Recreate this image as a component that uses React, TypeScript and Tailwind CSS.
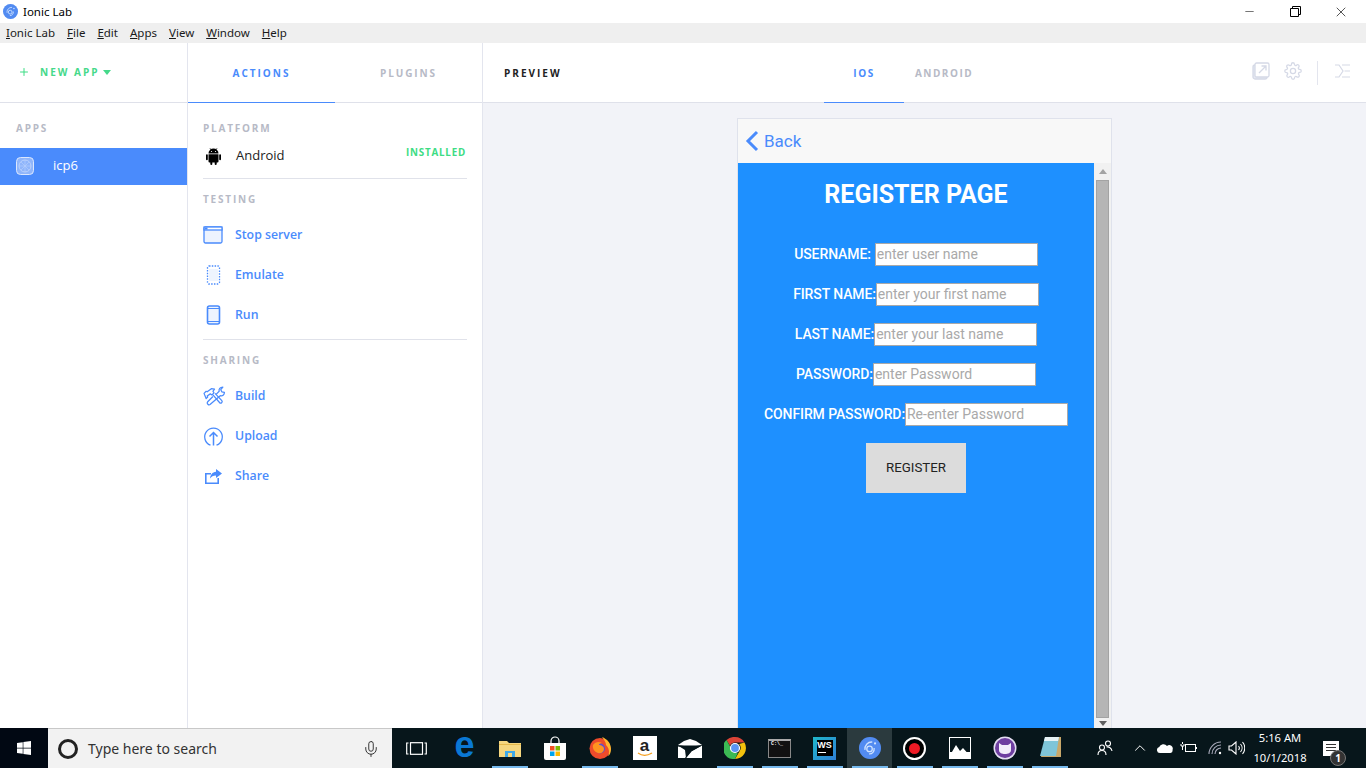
import { ChevronUp, Mic, Minus, Plus, X } from "lucide-react";
import { FaWindows } from "react-icons/fa";

const BLUE = "#4a8bfc";

function IonicLogo({ size }: { size: number }) {
  return (
    <svg width={size} height={size} viewBox="0 0 24 24">
      <circle cx="12" cy="12" r="12" fill="#4a8ff5" />
      <circle cx="12" cy="12" r="12" fill="#6a7fe8" opacity="0.25" />
      <circle cx="11.5" cy="13" r="3" fill="none" stroke="#cfe2ff" strokeWidth="1.4" />
      <path d="M6.5 14c-.6-4.5 3-9 8-8.500" fill="none" stroke="#cfe2ff" strokeWidth="1.4" />
      <path d="M16.500 12c.5 3.500-2 6.800-5.500 6.500" fill="none" stroke="#cfe2ff" strokeWidth="1.4" />
      <circle cx="17.500" cy="7" r="1.200" fill="#cfe2ff" />
    </svg>
  );
}

function SectionLabel({ children }: { children: string }) {
  return <div className="text-[10px] font-bold tracking-[0.18em] text-[#b7bac6] leading-[14px]">{children}</div>;
}

function ActionRow({ icon, label }: { icon: React.ReactNode; label: string }) {
  return (
    <div className="flex items-center h-[40px]">
      <div className="w-[32px] flex items-center">{icon}</div>
      <span className="text-[12.300px] font-semibold text-[#4a8bfc]">{label}</span>
    </div>
  );
}

const AndroidIcon = (
  <svg width="21" height="17" viewBox="0 0 21 17" fill="#000">
    <path d="M5.500 5.500a5 5 0 0 1 10 0z" />
    <path d="M7 .3l1.500 2M14 .3l-1.500 2" stroke="#000" strokeWidth="0.800" />
    <path d="M5.500 6.200h10v7.300a1 1 0 0 1-1 1h-8a1 1 0 0 1-1-1z" />
    <rect x="3" y="6.200" width="1.800" height="6" rx="0.900" />
    <rect x="16.200" y="6.200" width="1.800" height="6" rx="0.900" />
    <rect x="7.300" y="13" width="2" height="4" rx="1" />
    <rect x="11.700" y="13" width="2" height="4" rx="1" />
    <circle cx="8.500" cy="3.500" r="0.600" fill="#fff" />
    <circle cx="12.500" cy="3.500" r="0.600" fill="#fff" />
  </svg>
);
const ServerIcon = (
  <svg width="20" height="18" viewBox="0 0 20 18">
    <rect x="1" y="1" width="18" height="16" rx="1.500" fill="#edf3fe" stroke={BLUE} strokeWidth="1.300" />
    <rect x="1" y="1" width="18" height="3" fill="#fff" stroke={BLUE} strokeWidth="1.300" />
    <rect x="1.500" y="1.500" width="3" height="2" fill={BLUE} />
  </svg>
);
const EmulateIcon = (
  <svg width="21" height="20" viewBox="0 0 21 20">
    <rect x="4.500" y="1" width="12" height="18" rx="1.500" fill="#fff" stroke={BLUE} strokeWidth="1.300" strokeDasharray="1.500 1.300" />
    <rect x="6" y="4" width="9" height="12" fill="#eef4fe" />
  </svg>
);
const RunIcon = (
  <svg width="21" height="20" viewBox="0 0 21 20">
    <rect x="4.500" y="1" width="12" height="18" rx="2" fill="#eef4fe" stroke={BLUE} strokeWidth="1.600" />
    <path d="M4.500 3.500h12M4.500 16.500h12" stroke={BLUE} strokeWidth="1.200" />
  </svg>
);
const BuildIcon = (
  <svg width="23" height="21" viewBox="0 0 22 20" fill="none" stroke={BLUE} strokeWidth="1.200" strokeLinejoin="round">
    <path d="M1 7l2-2 1 .5L8 2.500l3 .5-1.500 2 1 1.500-2 2L7 7.500 4 9.500l.5 1L3 12z" />
    <path d="M9.500 8.500l6.500 7.500c1 1.200 3.200-.5 2-2l-6.500-7" />
    <path d="M12.500 8l3-3c-.7-2 .8-4 3.500-4l-2 2.500 1 2 2.500.500c0 2.500-2 4-4 3.200L7 17.500c-1.500 1.500-4-.8-2.500-2.500l5-5" />
  </svg>
);
const UploadIcon = (
  <svg width="21" height="21" viewBox="0 0 21 21" fill="none" stroke={BLUE} strokeWidth="1.300">
    <path d="M7.500 19.200a8.800 8.800 0 1 1 6 0" />
    <path d="M10.500 19.500V7M6.500 10.500l4-4 4 4" strokeWidth="1.500" />
  </svg>
);
const ShareIcon = (
  <svg width="20" height="18" viewBox="0 0 20 18">
    <path d="M2 6h6v1.600H3.600v7.800h10.800V11H16v6H2z" fill={BLUE} />
    <path d="M13 2l6 4.500L13 11V8.500c-3 0-4.500 1-6 3 .3-3.500 2.300-6.500 6-6.800z" fill={BLUE} />
  </svg>
);

function TaskIcon({ children, running, active }: { children: React.ReactNode; running?: boolean; active?: boolean }) {
  return (
    <div className={`relative w-[45px] h-full flex items-center justify-center ${active ? "bg-[#2b3a3e]" : ""}`}>
      {children}
      {running && <div className="absolute left-[5px] right-[4px] bottom-0 h-[2px] bg-[#76b9ed]" />}
    </div>
  );
}

function FormRow({ label, placeholder, tight }: { label: string; placeholder: string; tight?: boolean }) {
  return (
    <div className={`flex items-center justify-center h-[23px] ${tight ? "" : "gap-[4px]"}`}>
      <span className="text-[14px] font-medium text-white tracking-[-0.1px]">{label}</span>
      <input
        readOnly
        placeholder={placeholder}
        className="w-[163px] h-[23px] bg-white border border-[#a9a9a9] px-[1px] pb-[1px] text-[14px] text-black outline-none placeholder:text-[#a9a9a9] font-['Roboto',sans-serif]"
      />
    </div>
  );
}

export default function App() {
  return (
    <div className="h-screen w-[1366px] overflow-hidden flex flex-col bg-white font-['Open_Sans',sans-serif]">
      {/* window title */}
      <div className="h-[23px] flex items-center shrink-0 bg-white">
        <div className="ml-[3px] mr-[5px] flex"><IonicLogo size={15} /></div>
        <span className="text-[11.500px] text-black font-['Noto_Sans',sans-serif]">Ionic Lab</span>
        <div className="ml-auto mr-[2px] flex h-full">
          <div className="w-[46px] flex items-center justify-center"><Minus size={13} strokeWidth={1} className="text-black" /></div>
          <div className="w-[46px] flex items-center justify-center">
            <svg width="11" height="11" viewBox="0 0 11 11" fill="none" stroke="#000">
              <path d="M.5 2.500h8v8h-8zM2.500 2.500v-2h8v8h-2" />
            </svg>
          </div>
          <div className="w-[46px] flex items-center justify-center"><X size={16} strokeWidth={1} className="text-black" /></div>
        </div>
      </div>

      {/* menu */}
      <div className="h-[20px] shrink-0 bg-[#efefef] flex items-center pl-[6px] gap-[12px] text-[11.500px] text-[#1a1a1a] font-['Noto_Sans',sans-serif]">
        {["Ionic Lab", "File", "Edit", "Apps", "View", "Window", "Help"].map((m) => (
          <span key={m}><span className="underline">{m[0]}</span>{m.slice(1)}</span>
        ))}
      </div>

      <div className="flex-1 flex min-h-0">
        {/* apps sidebar */}
        <div className="w-[188px] shrink-0 border-r border-[#e3e5ee] flex flex-col">
          <div className="h-[60px] border-b border-[#dfe1ea] flex items-center pl-[18px] pb-[1px] mb-[18px] text-[#3ddc84]">
            <Plus size={12} strokeWidth={2} className="mr-[10px]" />
            <span className="text-[10px] font-bold tracking-[0.2em] text-[#45d98a]">NEW APP</span>
            <div className="ml-[4px] w-0 h-0 border-x-[4px] border-x-transparent border-t-[5px] border-t-[#45d98a]" />
          </div>
          <div className="pl-[16px] mb-[13px]"><SectionLabel>APPS</SectionLabel></div>
          <div className="h-[37px] bg-[#4a8bfc] flex items-center pl-[16px] pb-[1px]">
            <svg width="18" height="18" viewBox="0 0 18 18">
              <rect x="0.500" y="0.500" width="17" height="17" rx="4" fill="#8fb5fb" stroke="#dbe7fe" />
              <circle cx="9" cy="9" r="6" fill="none" stroke="#b9d1fd" />
              <path d="M3 9h12M9 3v12M5 5l8 8M13 5l-8 8" stroke="#b9d1fd" strokeWidth="0.600" />
            </svg>
            <span className="ml-[19px] text-[13px] text-white">icp6</span>
          </div>
        </div>

        {/* actions column */}
        <div className="w-[295px] shrink-0 border-r border-[#e3e5ee] flex flex-col">
          <div className="h-[60px] border-b border-[#dfe1ea] flex shrink-0">
            <div className="w-[147px] h-[60px] border-b border-[#4a8bfc] pt-[2px] flex items-center justify-center text-[10px] font-bold tracking-[0.2em] text-[#4a8bfc]">ACTIONS</div>
            <div className="flex-1 pt-[2px] flex items-center justify-center text-[10px] font-bold tracking-[0.19em] text-[#b7bac6]">PLUGINS</div>
          </div>
          <div className="px-[15px] pt-[18px]">
            <SectionLabel>PLATFORM</SectionLabel>
            <div className="flex items-center h-[28px] mt-[7px]">
              <div className="flex">{AndroidIcon}</div>
              <span className="ml-[12px] text-[13px] text-[#222]">Android</span>
              <span className="ml-auto mr-[1px] mb-[6px] text-[9.800px] font-bold tracking-[0.08em] text-[#3ddc84]">INSTALLED</span>
            </div>
            <div className="h-px bg-[#e0e2ea] mt-[8px]" />
            <div className="mt-[13px]"><SectionLabel>TESTING</SectionLabel></div>
            <div className="mt-[9px]">
              <ActionRow icon={ServerIcon} label="Stop server" />
              <ActionRow icon={EmulateIcon} label="Emulate" />
              <ActionRow icon={RunIcon} label="Run" />
            </div>
            <div className="h-px bg-[#e0e2ea] mt-[4px]" />
            <div className="mt-[13px]"><SectionLabel>SHARING</SectionLabel></div>
            <div className="mt-[9px]">
              <ActionRow icon={BuildIcon} label="Build" />
              <ActionRow icon={UploadIcon} label="Upload" />
              <ActionRow icon={ShareIcon} label="Share" />
            </div>
          </div>
        </div>

        {/* preview */}
        <div className="flex-1 flex flex-col min-w-0 bg-[#f2f3f8]">
          <div className="h-[60px] shrink-0 bg-white border-b border-[#dfe1ea] flex items-center">
            <div className="w-[341px] pl-[21px] pt-[2px] text-[10px] font-bold tracking-[0.2em] text-[#222]">PREVIEW</div>
            <div className="w-[80px] h-[60px] pt-[2px] border-b border-[#4a8bfc] flex items-center justify-center text-[10px] font-bold tracking-[0.15em] text-[#4a8bfc]">IOS</div>
            <div className="w-[80px] pt-[2px] flex items-center justify-center text-[10px] font-bold tracking-[0.15em] text-[#b7bac6]">ANDROID</div>
            <div className="flex-1 flex items-center justify-end pr-[15px] pb-[4px]">
              <svg width="18" height="18" viewBox="0 0 18 18" fill="none" stroke="#d5d9e6" strokeWidth="1.300">
                <rect x="1" y="3" width="14" height="14" rx="2" fill="#e6e9f2" />
                <rect x="3" y="1" width="14" height="14" rx="1.500" fill="#fff" />
                <path d="M7 11l7-7M9.500 4H14v4.500" />
              </svg>
              <svg className="ml-[14px]" width="18" height="18" viewBox="0 0 24 24" fill="none" stroke="#d5d9e6" strokeWidth="1.700">
                <circle cx="12" cy="12" r="3.500" />
                <path d="M19.400 15a1.650 1.650 0 0 0 .33 1.820l.06.06a2 2 0 1 1-2.830 2.830l-.06-.06a1.650 1.650 0 0 0-2.800 1.170V21a2 2 0 1 1-4 0v-.09a1.650 1.650 0 0 0-2.800-1.170l-.06.06a2 2 0 1 1-2.830-2.830l.06-.06a1.650 1.650 0 0 0-1.170-2.800H3a2 2 0 1 1 0-4h.09a1.650 1.650 0 0 0 1.170-2.800l-.06-.06a2 2 0 1 1 2.830-2.830l.06.06a1.650 1.650 0 0 0 2.800-1.170V3a2 2 0 1 1 4 0v.09a1.650 1.650 0 0 0 2.800 1.170l.06-.06a2 2 0 1 1 2.830 2.830l-.06.06a1.650 1.650 0 0 0 1.170 2.800H21a2 2 0 1 1 0 4h-.09a1.650 1.650 0 0 0-1.510 1z" />
              </svg>
              <div className="ml-[15px] mr-[16px] w-px h-[24px] bg-[#e3e5ee] mt-[4px]" />
              <svg width="17" height="14" viewBox="0 0 17 14" fill="none" stroke="#d5d9e6" strokeWidth="1.200">
                <path d="M1 1h4l4 6-4 6H1M8 1h8M10.500 7H16M8 13h8" />
              </svg>
            </div>
          </div>

          <div className="flex-1 min-h-0 overflow-hidden pt-[15px]">
            <div className="w-[375px] h-[700px] mx-auto border border-[#dfe2ec] flex flex-col">
              <div className="h-[44px] shrink-0 bg-[#f8f8f8] flex items-center pl-[7px] text-[#4a8bfc]">
                <svg width="14" height="22" viewBox="0 0 14 22" fill="none" stroke={BLUE} strokeWidth="3">
                  <path d="M12 2L3 11l9 9" />
                </svg>
                <span className="ml-[5px] mt-[1px] text-[17px] font-['Roboto',sans-serif]">Back</span>
              </div>
              <div className="flex-1 flex min-h-0 font-['Roboto',sans-serif]">
                <div className="w-[356px] bg-[#1e90ff] flex flex-col">
                  <h1 className="mt-[17px] text-center text-[25px] leading-[30px] font-bold text-white">REGISTER PAGE</h1>
                  <div className="mt-[33px] flex flex-col gap-[17px]">
                    <FormRow label="USERNAME:" placeholder="enter user name" />
                    <FormRow label="FIRST NAME:" placeholder="enter your first name" tight />
                    <FormRow label="LAST NAME:" placeholder="enter your last name" tight />
                    <FormRow label="PASSWORD:" placeholder="enter Password" tight />
                    <FormRow label="CONFIRM PASSWORD:" placeholder="Re-enter Password" tight />
                  </div>
                  <button className="mt-[17px] mx-auto w-[100px] h-[50px] bg-[#dcdcdc] text-[13.300px] text-[#222]">REGISTER</button>
                </div>
                <div className="w-[17px] bg-[#f1f1f1] flex flex-col items-center">
                  <div className="mt-[6px] w-0 h-0 border-x-[4px] border-x-transparent border-b-[5px] border-b-[#a3a3a3]" />
                  <div className="mt-[6px] w-[13px] h-[538px] bg-[#b5b5b5] border border-[#a3a3a3]" />
                  <div className="mt-[3px] w-0 h-0 border-x-[4px] border-x-transparent border-t-[5px] border-t-[#606060]" />
                </div>
              </div>
            </div>
          </div>
        </div>
      </div>

      {/* taskbar */}
      <div className="h-[40px] shrink-0 bg-[#07161b] flex items-center text-white font-['Noto_Sans',sans-serif]">
        <div className="w-[48px] h-full bg-[#010813] flex items-center justify-center"><FaWindows size={16} /></div>
        <div className="w-[344px] h-full bg-[#f2f2f2] border-t border-[#c8c8c8] flex items-center text-[#333]">
          <div className="ml-[10px] w-[20px] h-[20px] rounded-full border-[3px] border-[#222]" />
          <span className="ml-[10px] text-[14px]">Type here to search</span>
          <Mic size={18} strokeWidth={1.300} className="ml-auto mr-[12px] text-[#333]" />
        </div>
        <div className="w-[48px] mr-[2px] h-full flex items-center justify-center">
          <svg width="21" height="13" viewBox="0 0 21 13" fill="none" stroke="#fff" strokeWidth="1.200">
            <rect x="4.500" y="0.700" width="12" height="11.600" />
            <path d="M2.500 1H.7v11h1.800M18.500 1h1.800v11h-1.800" />
          </svg>
        </div>
        <TaskIcon>
          <span className="text-[36px] leading-none font-bold text-[#0a78d4] font-['Liberation_Sans',sans-serif] mt-[-6px]">e</span>
        </TaskIcon>
        <TaskIcon running>
          <svg width="22" height="18" viewBox="0 0 22 18">
            <path d="M0 2h8l2 2h12v14H0z" fill="#f6d77f" />
            <path d="M0 5h22v1H0z" fill="#e5b94c" />
            <path d="M6 12h10v6H6z" fill="#3fa9e8" />
            <path d="M9 14h4v4H9z" fill="#f6d77f" />
          </svg>
        </TaskIcon>
        <TaskIcon>
          <svg width="22" height="24" viewBox="0 0 22 24">
            <path d="M7 8V5a4 4 0 0 1 8 0v3" fill="none" stroke="#fff" strokeWidth="1.200" />
            <path d="M0 7h22v15a2 2 0 0 1-2 2H2a2 2 0 0 1-2-2z" fill="#fff" />
            <rect x="6" y="10" width="4.500" height="4.500" fill="#f25022" />
            <rect x="11.500" y="10" width="4.500" height="4.500" fill="#7fba00" />
            <rect x="6" y="15.500" width="4.500" height="4.500" fill="#00a4ef" />
            <rect x="11.500" y="15.500" width="4.500" height="4.500" fill="#ffb900" />
          </svg>
        </TaskIcon>
        <TaskIcon running>
          <svg width="22" height="22" viewBox="0 0 22 22">
            <circle cx="11" cy="11.500" r="10.500" fill="#ee4b2b" />
            <path d="M13 0c5 2 9 6 9 12 0 3-1 6-3 7 2-4 1-8-2-11 0-3-2-5-4-8z" fill="#ffb52e" />
            <circle cx="11" cy="11.500" r="5" fill="#5b4fd0" />
            <path d="M4 8c2-3 6-4 9-2-2 0-3 1-3 2 2 0 5 1 5 4 0 3-3 5-6 4-3-1-6-4-5-8z" fill="#ff9420" />
          </svg>
        </TaskIcon>
        <TaskIcon>
          <div className="w-[24px] h-[24px] bg-white flex items-center justify-center relative">
            <span className="text-[17px] leading-none font-bold text-[#222] font-['Liberation_Sans',sans-serif] mt-[-5px]">a</span>
            <svg className="absolute bottom-[3px] left-[4px]" width="16" height="5" viewBox="0 0 16 5" fill="none" stroke="#f59e1c" strokeWidth="1.300">
              <path d="M1 1c4 3 9 3 14 0" />
            </svg>
          </div>
        </TaskIcon>
        <TaskIcon>
          <svg width="24" height="19" viewBox="0 0 24 19">
            <path d="M0 6l6-4 6-2 6 2 6 4-12 2z" fill="#fff" />
            <path d="M0 6.500l15 3L8 19h16V6.500L14 12z" fill="#fff" />
            <path d="M0 7.500V19h7l6.500-9z" fill="#fff" />
            <path d="M0 6.500l24 0-10 5.500-6 7-1-8z" fill="#07161b" />
          </svg>
        </TaskIcon>
        <TaskIcon running>
          <svg width="22" height="22" viewBox="0 0 22 22">
            <path d="M11 0a11 11 0 0 1 9.500 5.500H11a5.500 5.500 0 0 0-5 3.300L2.500 3A11 11 0 0 1 11 0z" fill="#db4437" />
            <path d="M20.500 5.500A11 11 0 0 1 11 22l4.800-8.200A5.500 5.500 0 0 0 15 7z" fill="#f4c20d" />
            <path d="M2.500 3L7 11a5 5 0 0 0 7 4.500L11 22A11 11 0 0 1 2.500 3z" fill="#3cba54" />
            <circle cx="11" cy="11" r="4.500" fill="#5a95f5" stroke="#fff" strokeWidth="1.200" />
          </svg>
        </TaskIcon>
        <TaskIcon running>
          <div className="w-[23px] h-[19px] bg-[#111] border border-[#888] border-t-[2px] border-t-[#aaa] px-[2px] flex flex-col">
            <span className="text-[5px] leading-[7px] font-bold text-white font-['Liberation_Mono',monospace]">C:\_</span>
          </div>
        </TaskIcon>
        <TaskIcon running>
          <div className="relative w-[23px] h-[23px] bg-gradient-to-br from-[#1fb6c9] to-[#2f7fd6] flex items-center justify-center">
            <div className="w-[16px] h-[16px] bg-black flex flex-col items-center">
              <span className="text-[9px] leading-[11px] font-bold text-white font-['Liberation_Sans',sans-serif]">WS</span>
              <div className="w-[8px] h-[1px] bg-white mr-[5px] mt-[1px]" />
            </div>
          </div>
        </TaskIcon>
        <TaskIcon running active>
          <IonicLogo size={22} />
        </TaskIcon>
        <TaskIcon running>
          <div className="w-[23px] h-[23px] rounded-full border-[2px] border-white bg-black flex items-center justify-center">
            <div className="w-[11px] h-[11px] rounded-full bg-[#f01a24]" />
          </div>
        </TaskIcon>
        <TaskIcon running>
          <svg width="22" height="22" viewBox="0 0 22 22">
            <rect width="22" height="22" fill="#fff" />
            <rect x="1" y="1" width="20" height="14" fill="#07161b" />
            <path d="M0 20l7-12 4 6 3-3 8 9v2H0z" fill="#fff" />
          </svg>
        </TaskIcon>
        <TaskIcon running>
          <svg width="24" height="24" viewBox="0 0 24 24">
            <circle cx="12" cy="12" r="11.500" fill="#e5dff2" />
            <circle cx="12" cy="12" r="10" fill="#6f3fa0" />
            <path d="M6 7l3 2h6l3-2v7c0 3-3 4-6 4s-6-1-6-4z" fill="#f3eefa" />
          </svg>
        </TaskIcon>
        <TaskIcon running>
          <svg width="22" height="24" viewBox="0 0 22 24">
            <path d="M7 1h15v20H2z" fill="#c9a86a" />
            <path d="M6 1h14L17 20H1z" fill="#7fc5d8" />
            <path d="M6 1h14l-1 4H5z" fill="#e7f2f5" />
          </svg>
        </TaskIcon>
        <div className="ml-[25px] flex items-center h-full flex-1">
          <svg width="16" height="16" viewBox="0 0 16 16" fill="none" stroke="#fff" strokeWidth="1.100">
            <circle cx="5" cy="7.500" r="2.500" /><path d="M1 15c0-3 1.500-4.500 4-4.500s4 1.500 4 4.500" />
            <circle cx="11" cy="3.500" r="2.500" /><path d="M9.500 7c2.500-.5 5 1 5.500 4" />
          </svg>
          <ChevronUp size={18} strokeWidth={1.300} className="ml-[18px]" />
          <svg className="ml-[7px]" width="17" height="10" viewBox="0 0 17 10"><path d="M4 10a3 3 0 0 1-.8-5.900A4.500 4.500 0 0 1 11 3a3.500 3.500 0 0 1 5.500 4A2.500 2.500 0 0 1 14.500 10z" fill="#fff" /></svg>
          <svg className="ml-[7px]" width="17" height="12" viewBox="0 0 17 12" fill="none" stroke="#fff">
            <rect x="5.500" y="2.500" width="10" height="7" /><path d="M16.500 5v2M1 2v2h3V2M2.500 4v4M2.500 0v2" />
          </svg>
          <svg className="ml-[11px]" width="16" height="14" viewBox="0 0 16 14" fill="none" stroke="#aab" strokeWidth="1.100">
            <path d="M1 13A12 12 0 0 1 13 1M4 13a9 9 0 0 1 9-9M7 13a6 6 0 0 1 6-6" /><circle cx="12" cy="12" r="1.200" fill="#fff" stroke="none" />
          </svg>
          <svg className="ml-[4px]" width="17" height="14" viewBox="0 0 17 14" fill="none" stroke="#fff" strokeWidth="1.100">
            <path d="M1 5h2.500L8 1v12L3.500 9H1zM10.500 5a3 3 0 0 1 0 4M12.500 3a6 6 0 0 1 0 8M14.500 1a9 9 0 0 1 0 12" />
          </svg>
          <div className="ml-[2px] w-[66px] flex flex-col items-center text-[11.200px] leading-[20px]">
            <span>5:16 AM</span>
            <span>10/1/2018</span>
          </div>
          <div className="ml-[10px] relative w-[16px] h-[15px] bg-white">
            <div className="mt-[3px] mx-[3px] h-px bg-[#333]" />
            <div className="mt-[2px] mx-[3px] h-px bg-[#333]" />
            <div className="mt-[2px] mx-[3px] h-px bg-[#333]" />
            <div className="absolute left-[7px] top-[9px] w-[16px] h-[16px] rounded-full bg-[#333] border border-[#777] flex items-center justify-center text-[10px] leading-none font-bold">1</div>
          </div>
        </div>
      </div>
    </div>
  );
}
